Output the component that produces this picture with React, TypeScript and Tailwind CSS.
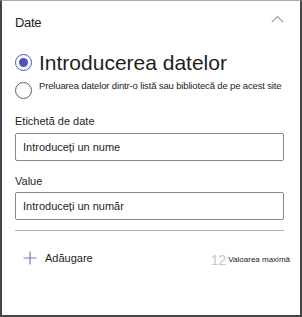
import React, { useState } from "react";

type Mode = "manual" | "list";

function Radio({ checked }: { checked: boolean }) {
  return checked ? (
    <span className="w-[17px] h-[17px] rounded-full border-[1.5px] border-[#4b53bc] flex items-center justify-center shrink-0">
      <span className="w-[9px] h-[9px] rounded-full bg-[#4b53bc]" />
    </span>
  ) : (
    <span className="block w-[17px] h-[17px] rounded-full border border-[#605e5c] shrink-0" />
  );
}

export default function App() {
  const [mode, setMode] = useState<Mode>("manual");

  return (
    <div
      className="w-[302px] h-[317px] bg-white border-x-2 border-b-2 border-t border-x-[#444] border-b-[#444] border-t-[#aaa] text-[#201f1e] overflow-hidden"
      style={{ fontFamily: '"Liberation Sans", Arial, sans-serif' }}
    >
      {/* Header */}
      <div className="flex items-center justify-between pl-[13px] pr-[16px] pt-[14px] h-[30px]">
        <span className="text-[13px] leading-[16px] tracking-[-0.3px]">Date</span>
        <svg width="13" height="8" viewBox="0 0 13 8" className="mt-[-8px]">
          <path d="M0.8 7.2 L6.5 1.5 L12.2 7.2" fill="none" stroke="#a19f9d" strokeWidth="1.2" />
        </svg>
      </div>

      {/* Radio group */}
      <div className="pl-[13px] pr-[10px] mt-[18px] flex flex-col">
        <label className="flex items-center gap-[7px] h-[26px] cursor-pointer" onClick={() => setMode("manual")}>
          <Radio checked={mode === "manual"} />
          <span className="text-[21px] leading-none">Introducerea datelor</span>
        </label>
        <label className="flex items-start gap-[7px] h-[26px] mt-[3px] cursor-pointer" onClick={() => setMode("list")}>
          <span className="flex mt-[4px]">
            <Radio checked={mode === "list"} />
          </span>
          <span className="text-[9.5px] leading-[12px] mt-[2px] tracking-[-0.15px]">
            Preluarea datelor dintr-o listă sau bibliotecă de pe acest site
          </span>
        </label>
      </div>

      {/* Fields */}
      <div className="pl-[13px] pt-[10px] flex flex-col">
        <label className="text-[11px] leading-[14px]">Etichetă de date</label>
        <input
          className="mt-[5px] h-[28px] w-[269px] border border-[#8a8886] rounded-[2px] px-[7px] text-[11px] text-[#201f1e] placeholder:text-[#201f1e] outline-none"
          placeholder="Introduceți un nume"
        />
        <label className="mt-[13px] text-[11px] leading-[14px]">Value</label>
        <input
          className="mt-[4px] h-[28px] w-[269px] border border-[#8a8886] rounded-[2px] px-[7px] text-[11px] text-[#201f1e] placeholder:text-[#201f1e] outline-none"
          placeholder="Introduceți un număr"
        />
        <div className="mt-[10px] h-[1px] w-[269px] bg-[#b3b0ad]" />
      </div>

      {/* Footer */}
      <div className="flex items-center justify-between pl-[21px] pr-[10px] mt-[17px] h-[20px]">
        <button className="flex items-center gap-[8px]">
          <svg width="14" height="14" viewBox="0 0 14 14">
            <path d="M7 0.5 V13.5 M0.5 7 H13.5" stroke="#7579c4" strokeWidth="1.2" />
          </svg>
          <span className="text-[11px]">Adăugare</span>
        </button>
        <div className="flex items-center gap-[2px] mt-[3px]">
          <span className="text-[14px] leading-none text-[#c8c6c4]">12</span>
          <span className="text-[8px] leading-none">Valoarea maximă</span>
        </div>
      </div>
    </div>
  );
}
